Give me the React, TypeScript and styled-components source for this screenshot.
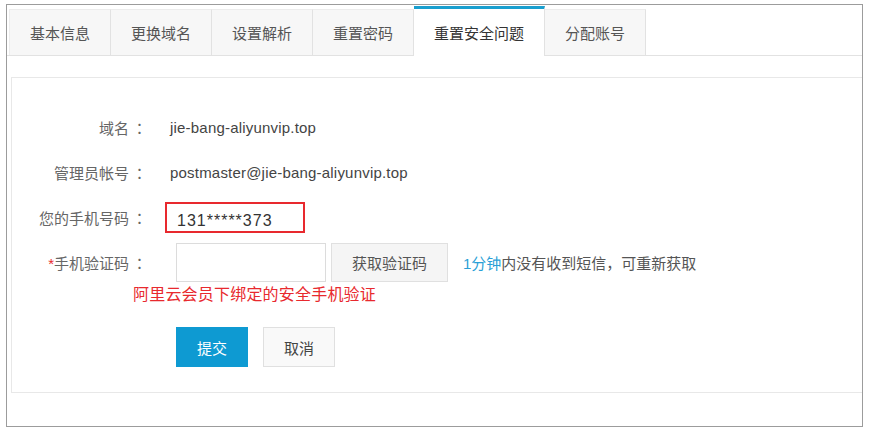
import styled, { createGlobalStyle } from 'styled-components';

const GlobalStyle = createGlobalStyle`
  body {
    margin: 0;
    background: #fff;
    font-family: "Liberation Sans", "Noto Sans CJK SC", sans-serif;
    font-size: 15px;
    color: #333;
  }
`;

const tabs = ['基本信息', '更换域名', '设置解析', '重置密码', '重置安全问题', '分配账号'];
const ACTIVE = 4;

const App = () => {
  return (
    <>
      <GlobalStyle />
      <Frame>
        <TabBar>
          {tabs.map((t, i) => (
            <Tab key={t} $active={i === ACTIVE}>
              {t}
            </Tab>
          ))}
        </TabBar>

        <Panel>
          <FormRow>
            <Label>
              域名<Colon>：</Colon>
            </Label>
            <Value>jie-bang-aliyunvip.top</Value>
          </FormRow>
          <FormRow>
            <Label>
              管理员帐号<Colon>：</Colon>
            </Label>
            <Value>postmaster@jie-bang-aliyunvip.top</Value>
          </FormRow>
          <FormRow>
            <Label>
              您的手机号码<Colon>：</Colon>
            </Label>
            <PhoneBox>131*****373</PhoneBox>
          </FormRow>
          <FormRow>
            <Label>
              <Star>*</Star>手机验证码<Colon>：</Colon>
            </Label>
            <Controls>
              <CodeInput type="text" />
              <SendButton type="button">获取验证码</SendButton>
              <Hint>
                <em>1分钟</em>内没有收到短信，可重新获取
              </Hint>
            </Controls>
          </FormRow>
          <Note>阿里云会员下绑定的安全手机验证</Note>
          <Actions>
            <Button $primary type="button">
              提交
            </Button>
            <Button type="button">取消</Button>
          </Actions>
        </Panel>
      </Frame>
    </>
  );
};

const Frame = styled.div`
  box-sizing: border-box;
  margin: 4px 0 0 6px;
  width: 857px;
  height: 423px;
  border: 1px solid #9c9c9c;
`;

const TabBar = styled.div`
  box-sizing: border-box;
  display: flex;
  align-items: flex-end;
  height: 51px;
  padding-left: 2px;
  border-bottom: 1px solid #e2e2e2;
`;

const Tab = styled.div<{ $active?: boolean }>`
  box-sizing: border-box;
  display: flex;
  align-items: center;
  padding: 0 20px;
  height: ${(p) => (p.$active ? '50px' : '46px')};
  margin-bottom: ${(p) => (p.$active ? '-1px' : '0')};
  border-right: 1px solid #e2e2e2;
  border-top: ${(p) => (p.$active ? '3px solid #199fcf' : '1px solid #ececec')};
  background: ${(p) => (p.$active ? '#fff' : '#f7f7f7')};
  color: ${(p) => (p.$active ? '#333' : '#555')};
  font-size: 15px;
  white-space: nowrap;

  &:first-child {
    border-left: 1px solid #ececec;
  }
`;

const Panel = styled.div`
  box-sizing: border-box;
  margin: 21px 0 0 4px;
  height: 316px;
  padding-top: 27px;
  border: 1px solid #e8e8e8;
  border-right: 0;
`;

const FormRow = styled.div`
  display: grid;
  grid-template-columns: 135px 1fr;
  column-gap: 18px;
  align-items: center;
  height: 45px;
`;

const Label = styled.div`
  text-align: right;
  color: #666;
  white-space: nowrap;
`;

const Colon = styled.span`
  margin-left: 3px;
  font-family: "Noto Sans CJK TC", sans-serif;
`;

const Star = styled.span`
  color: #e8292e;
`;

const Value = styled.div`
  padding-left: 5px;
  color: #444;
  letter-spacing: 0.2px;
`;

const PhoneBox = styled.div`
  box-sizing: border-box;
  display: flex;
  align-items: center;
  width: 140px;
  height: 31px;
  padding: 7px 0 0 10px;
  border: 2px solid #e8292e;
  color: #333;
  font-size: 16px;
  letter-spacing: 1px;
`;

const Controls = styled.div`
  display: flex;
  align-items: center;
  padding-left: 11px;
`;

const CodeInput = styled.input`
  box-sizing: border-box;
  width: 150px;
  height: 39px;
  border: 1px solid #dcdcdc;
  outline: none;
  font-size: 15px;
`;

const SendButton = styled.button`
  box-sizing: border-box;
  width: 117px;
  height: 39px;
  margin-left: 5px;
  border: 1px solid #e0e0e0;
  background: #f5f5f5;
  color: #555;
  font-family: inherit;
  font-size: 15px;
`;

const Hint = styled.span`
  margin-left: 15px;
  color: #555;

  em {
    font-style: normal;
    color: #2a9fd6;
  }
`;

const Note = styled.div`
  height: 20px;
  padding-left: 121px;
  line-height: 20px;
  font-size: 16px;
  color: #e8292e;
  letter-spacing: 0.2px;
`;

const Actions = styled.div`
  display: flex;
  gap: 15px;
  margin-top: 22px;
  padding-left: 164px;
`;

const Button = styled.button<{ $primary?: boolean }>`
  box-sizing: border-box;
  width: 72px;
  height: 40px;
  border: 1px solid ${(p) => (p.$primary ? '#0e9ad2' : '#e0e0e0')};
  background: ${(p) => (p.$primary ? '#0e9ad2' : '#f9f9f9')};
  color: ${(p) => (p.$primary ? '#fff' : '#444')};
  font-family: inherit;
  font-size: 15px;
`;

export default App;
